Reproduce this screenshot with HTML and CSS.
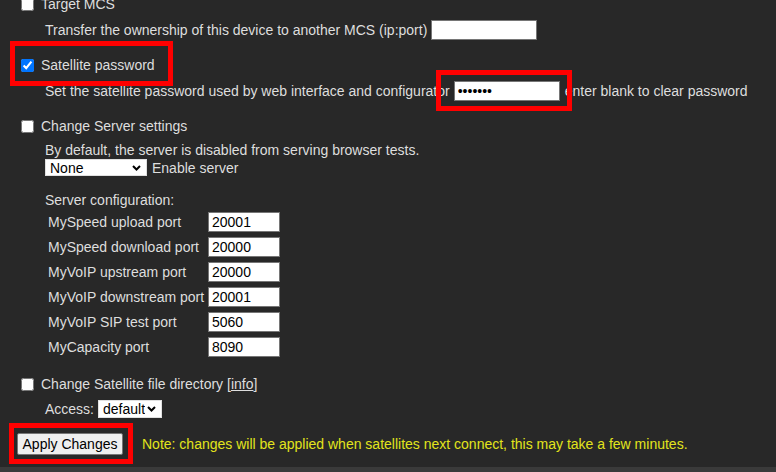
FILE: index.html
```html
<!DOCTYPE html>
<html>
<head>
<meta charset="utf-8">
<link rel="stylesheet" href="styles.css">
</head>
<body>
<div class="page">
  <div class="opt-row first"><input type="checkbox" class="cb"><span>Target MCS</span></div>
  <div class="desc-row r-b"><span>Transfer the ownership of this device to another MCS (ip:port)</span><input type="text" class="txt wide gap4"></div>

  <div class="opt-row r-c"><input type="checkbox" class="cb" checked><span>Satellite password</span></div>
  <div class="desc-row r-d"><span>Set the satellite password used by web interface and configurator</span><input type="password" class="txt wide gap4" value="1234567"><span class="gap5">enter blank to clear password</span></div>

  <div class="opt-row r-e"><input type="checkbox" class="cb"><span>Change Server settings</span></div>
  <div class="desc-row short r-f"><span>By default, the server is disabled from serving browser tests.</span></div>
  <div class="desc-row sel-row"><select class="sel sel-none"><option>None</option></select><span class="gap5">Enable server</span></div>

  <div class="desc-row short r-h"><span>Server configuration:</span></div>
  <div class="ports">
    <div class="port-row"><span class="port-label">MySpeed upload port</span><input type="text" class="txt port" value="20001"></div>
    <div class="port-row"><span class="port-label">MySpeed download port</span><input type="text" class="txt port" value="20000"></div>
    <div class="port-row"><span class="port-label">MyVoIP upstream port</span><input type="text" class="txt port" value="20000"></div>
    <div class="port-row"><span class="port-label">MyVoIP downstream port</span><input type="text" class="txt port" value="20001"></div>
    <div class="port-row"><span class="port-label">MyVoIP SIP test port</span><input type="text" class="txt port" value="5060"></div>
    <div class="port-row"><span class="port-label">MyCapacity port</span><input type="text" class="txt port" value="8090"></div>
  </div>

  <div class="opt-row r-i"><input type="checkbox" class="cb"><span>Change Satellite file directory [<a class="link" href="#">info</a>]</span></div>
  <div class="desc-row r-j"><span>Access:</span><select class="sel sel-access"><option>default</option></select></div>

  <div class="btn-row"><button class="btn">Apply Changes</button><span class="note">Note: changes will be applied when satellites next connect, this may take a few minutes.</span></div>

  <div class="mark mark-1"></div>
  <div class="mark mark-2"></div>
  <div class="mark mark-3"></div>
</div>
<div class="strip"></div>
</body>
</html>
```
FILE: styles.css
```css
html, body {
  margin: 0;
  padding: 0;
  background: #282828;
}
body {
  font-family: "Liberation Sans", Arial, sans-serif;
  font-size: 14px;
  color: #dedede;
}
.page {
  position: relative;
  height: 467px;
  overflow: hidden;
  padding-left: 17px;
  box-sizing: border-box;
}
.opt-row {
  display: flex;
  align-items: center;
  height: 20px;
  white-space: nowrap;
}
.opt-row.first { margin-top: -6px; }
.cb {
  width: 13px;
  height: 13px;
  margin: 0 7px 0 4px;
  flex: none;
}
.desc-row {
  display: flex;
  align-items: center;
  height: 24px;
  padding-left: 28px;
  white-space: nowrap;
}
.desc-row.short { height: 18px; }
.r-b { margin-top: 4px; }
.r-c { margin-top: 13px; }
.r-d { margin-top: 4px; }
.r-e { margin-top: 13px; }
.r-f { margin-top: 5px; }
.sel-row { height: 17px; }
.r-h { margin-top: 15px; height: 17px; }
.txt {
  box-sizing: border-box;
  height: 20px;
  border: 1px solid #767676;
  background: #fff;
  color: #000;
  padding: 1px 3px;
  margin: 0;
  font-family: "Liberation Sans", Arial, sans-serif;
  font-size: 14px;
  border-radius: 0;
  outline: none;
}
.wide { width: 106px; }
.gap4 { margin-left: 4px; }
.gap5 { margin-left: 5px; }
.sel {
  -webkit-appearance: none;
  appearance: none;
  box-sizing: border-box;
  margin: 0;
  font-family: "Liberation Sans", Arial, sans-serif;
  font-size: 14px;
  line-height: 16px;
  color: #000;
  background-color: #fff;
  background-image: url("data:image/svg+xml,%3Csvg xmlns='http://www.w3.org/2000/svg' width='9' height='6' viewBox='0 0 9 6'%3E%3Cpath d='M1 1l3.5 3.5L8 1' fill='none' stroke='%23000' stroke-width='2'/%3E%3C/svg%3E");
  background-repeat: no-repeat;
  background-position: right 5px center;
  background-size: 9px 6px;
  border: 1px solid #e0e0e0;
  border-radius: 0;
  padding: 0 16px 0 4px;
}
.sel-none { width: 102px; height: 17px; }
.sel-access { width: 64px; height: 18px; margin-left: 4px; }
.ports {
  display: flex;
  flex-direction: column;
  padding-left: 31px;
}
.port-row {
  display: flex;
  align-items: center;
  height: 25px;
  white-space: nowrap;
}
.port-label { width: 160px; flex: none; }
.port { width: 72px; }
.r-i { margin-top: 15px; }
.r-j { margin-top: 5px; height: 20px; }
.link { color: #dedede; text-decoration: underline; }
.btn-row {
  display: flex;
  align-items: center;
  height: 21px;
  margin-top: 14px;
  white-space: nowrap;
}
.btn {
  box-sizing: border-box;
  height: 22px;
  width: 106px;
  margin: 0;
  padding: 0 4px;
  font-family: "Liberation Sans", Arial, sans-serif;
  font-size: 14px;
  color: #000;
  background: #efefef;
  border: 1px solid #767676;
  border-radius: 2px;
}
.note {
  margin-left: 19px;
  color: #e2e41c;
}
.mark {
  position: absolute;
  border: 5px solid #ff0000;
  box-sizing: border-box;
}
.mark-1 { left: 10px; top: 41px; width: 163px; height: 45px; }
.mark-2 { left: 436px; top: 70px; width: 136px; height: 41px; }
.mark-3 { left: 9px; top: 423px; width: 124px; height: 41px; }
.strip {
  height: 5px;
  background: #3a3a3a;
}
```
